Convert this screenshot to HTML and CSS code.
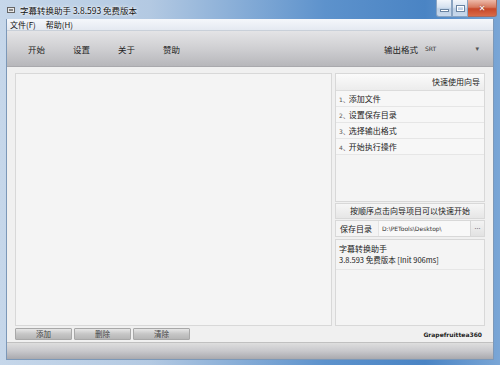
FILE: index.html
```html
<!DOCTYPE html>
<html lang="zh-CN">
<head>
<meta charset="UTF-8">
<title>字幕转换助手 3.8.593 免费版本</title>
<link rel="stylesheet" href="styles.css">
</head>
<body>

<div class="window">
  <!-- title bar -->
  <div class="titlebar">
    <svg class="app-icon" width="9" height="8" viewBox="0 0 9 8">
      <rect x="0.5" y="1.5" width="7" height="5" fill="#e8e8e8" stroke="#666"/>
      <rect x="2" y="3" width="4" height="2" fill="#888"/>
    </svg>
    <span class="title">字幕转换助手 3.8.593 免费版本</span>
    <div class="controls">
      <div class="ctl min"><span></span></div>
      <div class="ctl max"><span></span></div>
      <div class="ctl close">✕</div>
    </div>
  </div>

  <div class="client">
    <div class="menubar">
      <span>文件(F)</span>
      <span>帮助(H)</span>
    </div>

    <div class="toolbar">
      <div class="tools">
        <span>开始</span>
        <span>设置</span>
        <span>关于</span>
        <span>赞助</span>
      </div>
      <div class="format">
        <span class="format-label">输出格式</span>
        <div class="select">
          <span>SRT</span>
          <span class="arrow">▾</span>
        </div>
      </div>
    </div>

    <div class="main">
      <div class="panels">
        <div class="filelist"></div>

        <div class="side">
          <div class="wizard">
            <div class="wizard-head">快速使用向导</div>
            <div class="step"><span class="num">1、</span>添加文件</div>
            <div class="step"><span class="num">2、</span>设置保存目录</div>
            <div class="step"><span class="num">3、</span>选择输出格式</div>
            <div class="step"><span class="num">4、</span>开始执行操作</div>
          </div>
          <div class="hint">按顺序点击向导项目可以快速开始</div>
          <div class="savedir">
            <span class="savedir-label">保存目录</span>
            <span class="path">D:\PETools\Desktop\</span>
            <span class="browse">...</span>
          </div>
          <div class="info">
            <div class="info-text">
              <div>字幕转换助手</div>
              <div>3.8.593 免费版本 [Init 906ms]</div>
            </div>
            <div class="info-rest"></div>
          </div>
        </div>
      </div>

      <div class="footer">
        <div class="buttons">
          <button class="btn">添加</button>
          <button class="btn">删除</button>
          <button class="btn">清除</button>
        </div>
        <span class="brand">Grapefruittea360</span>
      </div>
    </div>

    <div class="statusbar"></div>
  </div>
</div>

</body>
</html>
```

FILE: styles.css
```css
body {
  margin: 0;
  font-family: "DejaVu Sans", "Noto Sans CJK SC", sans-serif;
  font-size: 8px;
  color: #333;
}
.window {
  width: 500px;
  height: 365px;
  display: flex;
  flex-direction: column;
  background: linear-gradient(to right, #c6d7ea 0%, #b3c9e2 30%, #5d92cc 65%, #4a84c4 85%, #7aa6d6 100%);
  box-sizing: border-box;
  padding: 0 6px 5px 6px;
}
/* title bar */
.titlebar {
  height: 19px;
  display: flex;
  align-items: center;
  position: relative;
}
.app-icon {
  margin-left: 1px;
  margin-right: 4px;
}
.title {
  font-family: "Noto Sans CJK SC", sans-serif;
  font-size: 8.5px;
  color: #111;
  text-shadow: 0 0 4px #fff, 0 0 2px #fff;
}
.controls {
  position: absolute;
  right: -3px;
  top: 0;
  display: flex;
}
.ctl {
  height: 17px;
  width: 16px;
  border: 1px solid #8aa4c2;
  border-top: none;
  background: linear-gradient(#f2f6fb, #d6e2f0 45%, #bccfe5 55%, #c9d9ec);
  box-sizing: border-box;
  display: flex;
  align-items: center;
  justify-content: center;
}
.ctl.min {
  border-bottom-left-radius: 3px;
}
.ctl.min span {
  width: 7px;
  height: 1px;
  background: #fff;
  border: 1px solid #6a84a2;
  margin-top: 4px;
}
.ctl.max span {
  width: 7px;
  height: 5px;
  border: 1px solid #6a84a2;
  box-shadow: inset 0 0 0 1px #fff;
}
.ctl.close {
  width: 29px;
  border-bottom-right-radius: 3px;
  border-left: none;
  border-color: #a86a5e;
  background: linear-gradient(#edb9a9, #d77a60 45%, #c8482a 55%, #d96a48);
  color: #fff;
  font-size: 8px;
  font-weight: bold;
  text-shadow: 0 0 2px #733;
}
/* client area */
.client {
  flex: 1;
  display: flex;
  flex-direction: column;
  background: #f0f0f0;
  border: 1px solid #7c98b8;
  border-top: none;
}
.menubar {
  height: 11px;
  display: flex;
  align-items: center;
  gap: 10px;
  padding-left: 3px;
  background: linear-gradient(#f5f7fb, #e4e9f1);
  border-bottom: 1px solid #c9d0d9;
  font-family: "Noto Sans CJK SC", sans-serif;
  font-size: 8px;
  color: #111;
}
.toolbar {
  height: 35px;
  display: flex;
  align-items: center;
  justify-content: space-between;
  background: linear-gradient(#e4e4e6, #cfcfd2 50%, #b7b7bb);
  border-bottom: 1px solid #a9a9ad;
  font-family: "Noto Sans CJK SC", sans-serif;
  font-size: 8.5px;
  color: #222;
}
.tools {
  display: flex;
  gap: 28px;
  padding-left: 21px;
}
.format {
  display: flex;
  align-items: center;
  padding-right: 14px;
}
.format-label {
  margin-right: 7px;
}
.select {
  width: 54px;
  display: flex;
  justify-content: space-between;
  align-items: center;
  font-family: "DejaVu Sans", sans-serif;
  font-size: 6px;
  color: #333;
}
.arrow {
  font-size: 7px;
  color: #555;
}
/* main content */
.main {
  flex: 1;
  display: flex;
  flex-direction: column;
  padding: 6px 8px 0 8px;
}
.panels {
  flex: 1;
  display: flex;
  gap: 3px;
}
.filelist {
  flex: 1;
  background: #f4f4f4;
  border: 1px solid #d8d8d8;
}
.side {
  width: 150px;
  display: flex;
  flex-direction: column;
  font-family: "Noto Sans CJK SC", sans-serif;
  font-size: 8px;
  color: #222;
}
.side > div {
  box-sizing: border-box;
}
.wizard {
  height: 129px;
  background: #f4f4f4;
  border: 1px solid #d8d8d8;
  display: flex;
  flex-direction: column;
}
.wizard-head {
  height: 16px;
  line-height: 16px;
  text-align: right;
  padding-right: 4px;
  background: linear-gradient(#fbfbfb, #ececec);
  border-bottom: 1px solid #dcdcdc;
}
.step {
  height: 15px;
  line-height: 15px;
  padding-left: 3px;
  border-bottom: 1px solid #e6e6e6;
  background: #f7f7f7;
}
.num {
  font-family: "DejaVu Sans", sans-serif;
  font-size: 6px;
  color: #555;
}
.hint {
  height: 16px;
  line-height: 14px;
  margin-top: 1px;
  text-align: center;
  background: linear-gradient(#f6f6f6, #e6e6e6);
  border: 1px solid #d8d8d8;
}
.savedir {
  height: 17px;
  margin-top: 1px;
  display: flex;
  align-items: center;
  background: #f4f4f4;
  border: 1px solid #d8d8d8;
}
.savedir-label {
  width: 38px;
  padding-left: 4px;
}
.path {
  flex: 1;
  align-self: stretch;
  display: flex;
  align-items: center;
  padding-left: 3px;
  background: #f8f8f8;
  border-left: 1px solid #e4e4e4;
  font-family: "DejaVu Sans", sans-serif;
  font-size: 6px;
  color: #333;
}
.browse {
  width: 13px;
  align-self: stretch;
  text-align: center;
  background: linear-gradient(#f3f3f3, #e2e2e2);
  border-left: 1px solid #d6d6d6;
  color: #666;
  font-size: 7px;
}
.info {
  flex: 1;
  margin-top: 2px;
  display: flex;
  flex-direction: column;
  background: #f4f4f4;
  border: 1px solid #d8d8d8;
}
.info-text {
  padding: 3px 3px 4px;
  line-height: 11px;
  border-bottom: 1px solid #e6e6e6;
}
.info-text div:last-child {
  font-size: 7.5px;
}
.info-rest {
  flex: 1;
}
.footer {
  height: 16px;
  display: flex;
  align-items: center;
  justify-content: space-between;
}
.buttons {
  display: flex;
  gap: 2px;
}
.btn {
  width: 57px;
  height: 12px;
  padding: 0;
  border: 1px solid #a8a8a8;
  border-radius: 1px;
  background: linear-gradient(#e6e6e6, #c6c6c6 50%, #b6b6b6);
  font-family: "Noto Sans CJK SC", sans-serif;
  font-size: 7.5px;
  color: #444;
  line-height: 10px;
}
.brand {
  font-family: "DejaVu Sans", sans-serif;
  font-size: 6px;
  font-weight: bold;
  color: #222;
  padding-right: 3px;
}
.statusbar {
  height: 16px;
  background: linear-gradient(#dedede, #c8c8cc 50%, #a9a9ae);
  border-top: 1px solid #c0c0c0;
}
```
